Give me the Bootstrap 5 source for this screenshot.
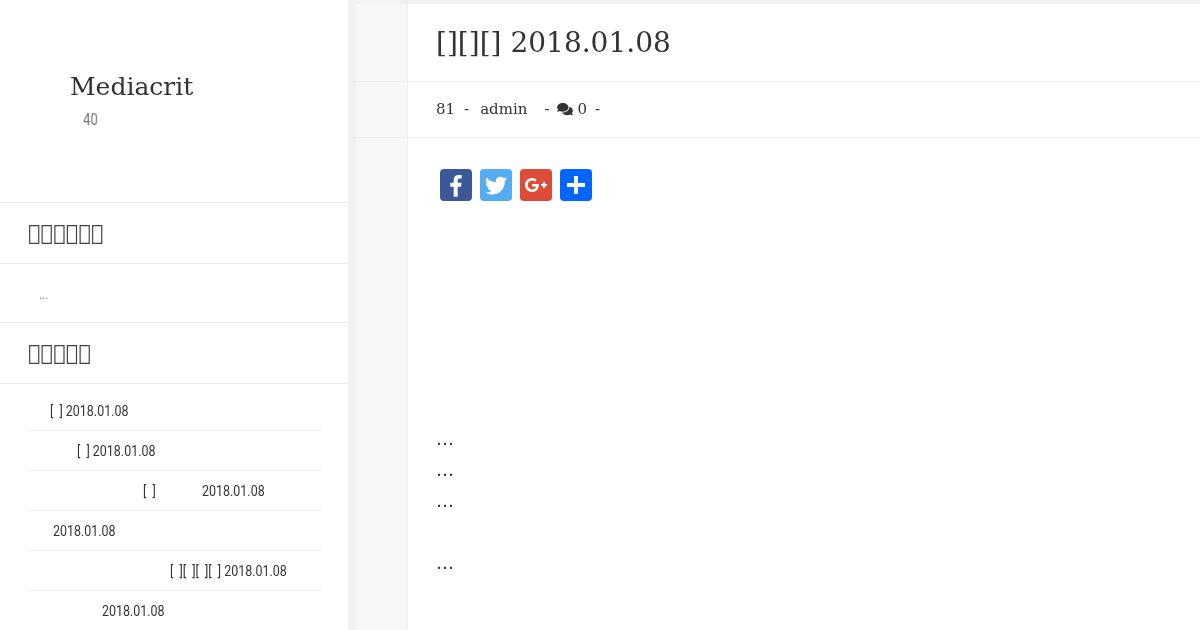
<!DOCTYPE html>
<html lang="en">
<head>
    <meta charset="UTF-8">
    <meta name="viewport" content="width=device-width, initial-scale=1.0">
    <title>Mediacrit</title>
    <link href="https://cdn.jsdelivr.net/npm/bootstrap@5.3.0/dist/css/bootstrap.min.css" rel="stylesheet">
    <style>
        html, body {
            height: 630px;
            overflow: hidden;
        }
        body {
            background-color: #f1f1f1;
            color: #333;
            font-family: "DejaVu Serif", serif;
        }
        .page-wrap {
            height: 630px;
            will-change: transform; /* greyscale text edges */
        }
        .side-col {
            width: 348px;
            flex-shrink: 0;
            background: #fff;
        }
        .brand-box {
            height: 203px;
            padding: 71px 0 0 70px;
            border-bottom: 1px solid #e8e8e8;
        }
        .brand-name {
            font-size: 25px;
            line-height: 32px;
            margin: 0;
            font-weight: 400;
        }
        /* no condensed face installed, so squeeze Roboto */
        .narrow-txt {
            display: block;
            font-family: "Roboto", sans-serif;
            transform: scaleX(.83);
            transform-origin: left center;
            white-space: pre;
        }
        .brand-sub {
            font-size: 16px;
            line-height: 20px;
            color: #777;
            margin: 7px 0 0 13px;
        }
        .side-title {
            height: 61px;
            margin: 0;
            padding-left: 28px;
            font-size: 21px;
            font-weight: 400;
            line-height: 60px;
            color: #444;
            border-bottom: 1px solid #e8e8e8;
        }
        .side-note {
            height: 59px;
            padding: 20px 0 0 39px;
            font-size: 14px;
            line-height: 20px;
            color: #777;
            border-bottom: 1px solid #e8e8e8;
        }
        .recent-list {
            list-style: none;
            margin: 7px 27px 0 28px;
            padding: 0;
        }
        .recent-list li {
            height: 40px;
            line-height: 40px;
            font-size: 15px;
            color: #333;
            border-bottom: 1px solid #eee;
        }
        .ind-a { padding-left: 22px; }
        .ind-b { padding-left: 49px; }
        .ind-c { padding-left: 115px; }
        .ind-d { padding-left: 25px; }
        .ind-e { padding-left: 142px; }
        .ind-f { padding-left: 74px; }
        .main-col {
            margin-left: 8px;
            margin-top: 4px;
            background: #fff;
        }
        .art-row {
            border-bottom: 1px solid #eee;
        }
        .rail-cell {
            width: 52px;
            flex-shrink: 0;
            background: #f7f7f7;
            border-right: 1px solid #eee;
        }
        .art-title {
            height: 77px;
            margin: 0;
            padding-left: 28px;
            font-size: 28px;
            font-weight: 400;
            line-height: 78px;
        }
        .art-meta {
            height: 55px;
            padding-left: 28px;
            font-size: 15px;
            line-height: 55px;
            white-space: pre;
        }
        .meta-dash { margin: 0 9px; }
        .meta-author { margin: 0 8px 0 2px; }
        .meta-end { margin-left: 8px; }
        .comment-icon {
            width: 16px;
            height: 14px;
            fill: #333;
            vertical-align: -2px;
            margin: 0 4px 0 -1px;
        }
        .art-body {
            padding: 31px 0 0 28px;
        }
        .share-btn {
            width: 32px;
            height: 32px;
            border-radius: 4px;
            display: block;
        }
        .share-fb { background: #3b5998; }
        .share-tw { background: #55acee; }
        .share-gp { background: #dd4b39; }
        .share-more { background: #0166ff; }
        .share-btn svg {
            width: 32px;
            height: 32px;
            fill: #fff;
            display: block;
        }
        .art-text {
            margin-top: 222px;
            font-size: 18px;
            line-height: 31px;
        }
    </style>
</head>
<body>
    <div class="page-wrap d-flex">
        <aside class="side-col">
            <div class="brand-box">
                <h1 class="brand-name">Mediacrit</h1>
                <div class="brand-sub"><span class="narrow-txt">40</span></div>
            </div>
            <h2 class="side-title">&#xE000;&#xE000;&#xE000;&#xE000;&#xE000;&#xE000;</h2>
            <div class="side-note"><span class="narrow-txt">...</span></div>
            <h2 class="side-title">&#xE000;&#xE000;&#xE000;&#xE000;&#xE000;</h2>
            <ul class="recent-list">
                <li class="ind-a"><span class="narrow-txt">[  ] 2018.01.08</span></li>
                <li class="ind-b"><span class="narrow-txt">[  ] 2018.01.08</span></li>
                <li class="ind-c"><span class="narrow-txt">[  ]               2018.01.08</span></li>
                <li class="ind-d"><span class="narrow-txt">2018.01.08</span></li>
                <li class="ind-e"><span class="narrow-txt">[  ][  ][  ][  ] 2018.01.08</span></li>
                <li class="ind-f"><span class="narrow-txt">2018.01.08</span></li>
            </ul>
        </aside>
        <main class="main-col flex-grow-1 d-flex flex-column">
            <div class="art-row d-flex">
                <div class="rail-cell"></div>
                <h1 class="art-title flex-grow-1">[][][] 2018.01.08</h1>
            </div>
            <div class="art-row d-flex">
                <div class="rail-cell"></div>
                <div class="art-meta flex-grow-1">81<span class="meta-dash">-</span><span class="meta-author">admin</span><span class="meta-dash">-</span><svg class="comment-icon" viewBox="0 0 576 512"><path d="M416 192c0-88.4-93.1-160-208-160S0 103.6 0 192c0 34.3 14.1 65.9 38 92-13.4 30.2-35.5 54.2-35.8 54.5-2.2 2.3-2.8 5.7-1.5 8.7S4.8 352 8 352c36.6 0 66.9-12.3 88.7-25 32.2 15.7 70.3 25 111.3 25 114.9 0 208-71.6 208-160zm122 220c23.9-26 38-57.7 38-92 0-66.9-53.5-124.2-129.3-148.1.9 6.6 1.3 13.3 1.3 20.1 0 105.9-107.7 192-240 192-10.8 0-21.3-.8-31.7-1.9C207.8 439.6 281.8 480 368 480c41 0 79.1-9.2 111.3-25 21.8 12.7 52.1 25 88.7 25 3.2 0 6.1-1.9 7.3-4.8 1.3-2.9.7-6.3-1.5-8.7-.3-.3-22.4-24.2-35.8-54.5z"/></svg>0<span class="meta-end">-</span></div>
            </div>
            <div class="d-flex flex-grow-1">
                <div class="rail-cell"></div>
                <div class="art-body flex-grow-1">
                    <div class="d-flex gap-2 ms-1">
                        <a class="share-btn share-fb" href="#"><svg viewBox="0 0 32 32"><path transform="translate(0.8 1.6) scale(.95)" d="M17.78 27.5V17.008h3.522l.527-4.09h-4.05v-2.61c0-1.182.33-1.99 2.023-1.99h2.166V4.66c-.375-.05-1.66-.16-3.155-.16-3.123 0-5.26 1.905-5.26 5.405v3.016h-3.53v4.09h3.53V27.5h4.223z"/></svg></a>
                        <a class="share-btn share-tw" href="#"><svg viewBox="0 0 32 32"><path transform="translate(1.3 1.9) scale(.92)" d="M28 8.557a9.913 9.913 0 0 1-2.828.775 4.93 4.93 0 0 0 2.166-2.725 9.738 9.738 0 0 1-3.13 1.194 4.92 4.92 0 0 0-3.593-1.55 4.924 4.924 0 0 0-4.794 6.049c-4.09-.21-7.72-2.17-10.15-5.15a4.942 4.942 0 0 0-.665 2.477c0 1.71.87 3.214 2.19 4.1a4.968 4.968 0 0 1-2.23-.616v.06c0 2.39 1.7 4.38 3.952 4.83-.414.115-.85.174-1.297.174-.318 0-.626-.03-.928-.086a4.935 4.935 0 0 0 4.6 3.42 9.893 9.893 0 0 1-6.114 2.107c-.398 0-.79-.023-1.175-.068a13.953 13.953 0 0 0 7.55 2.213c9.056 0 14.01-7.507 14.01-14.013 0-.213-.005-.426-.015-.637.96-.695 1.795-1.56 2.455-2.55z"/></svg></a>
                        <a class="share-btn share-gp" href="#"><svg viewBox="0 0 32 32"><path d="M27 15h-2v-2h-2v2h-2v2h2v2h2v-2h2m-15-2v2.4h3.97c-.16 1.03-1.2 3.02-3.97 3.02-2.39 0-4.34-1.98-4.34-4.42s1.95-4.42 4.34-4.42c1.36 0 2.27.58 2.79 1.08l1.9-1.83C15.47 9.69 13.89 9 12 9c-3.87 0-7 3.13-7 7s3.13 7 7 7c4.04 0 6.72-2.84 6.72-6.84 0-.46-.05-.81-.11-1.16H12z"/></svg></a>
                        <a class="share-btn share-more" href="#"><svg viewBox="0 0 32 32"><path d="M14 7h4v18h-4z"/><path d="M7 14h18v4H7z"/></svg></a>
                    </div>
                    <div class="art-text">…<br>…<br>…<br><br>…</div>
                </div>
            </div>
        </main>
    </div>
    <script src="https://cdn.jsdelivr.net/npm/bootstrap@5.3.0/dist/js/bootstrap.bundle.min.js"></script>
</body>
</html>
